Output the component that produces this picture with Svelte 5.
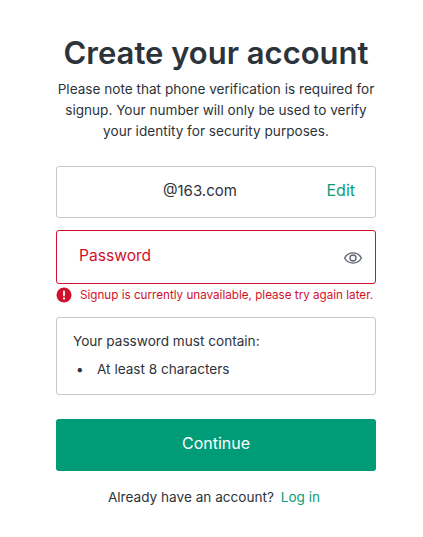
<script lang="ts">
  let showPassword = $state(false);
</script>

<main class="page">
  <h1 class="title">Create your account</h1>
  <p class="note">Please note that phone verification is required for signup. Your number will only be used to verify your identity for security purposes.</p>

  <div class="field email">
    <span class="email-value">@163.com</span>
    <button type="button" class="edit">Edit</button>
  </div>

  <div class="field password">
    <span class="placeholder">Password</span>
    <button type="button" class="eye" aria-label="Show password" onclick={() => (showPassword = !showPassword)}>
      <svg width="20" height="20" viewBox="0 0 20 20" fill="none" stroke="#5f6670" stroke-width="1.4">
        <path d="M1.6 10C3.4 6.7 6.4 4.9 10 4.9s6.6 1.8 8.4 5.1c-1.8 3.3-4.8 5.1-8.4 5.1S3.4 13.3 1.6 10Z" />
        <circle cx="10" cy="10" r="3" />
      </svg>
    </button>
  </div>

  <div class="error">
    <svg width="16" height="16" viewBox="0 0 16 16">
      <circle cx="8" cy="8" r="7.5" fill="#d0112b" />
      <rect x="7.1" y="3.6" width="1.8" height="5.6" rx="0.9" fill="#fff" />
      <circle cx="8" cy="11.4" r="1.05" fill="#fff" />
    </svg>
    <span>Signup is currently unavailable, please try again later.</span>
  </div>

  <div class="rules">
    <p>Your password must contain:</p>
    <ul>
      <li>At least 8 characters</li>
    </ul>
  </div>

  <button type="button" class="continue">Continue</button>

  <p class="login">Already have an account? <a href="#login">Log in</a></p>
</main>

<style>
  :global(body) {
    background: #fff;
    font-family: Inter, "Noto Sans", sans-serif;
    color: #2d333a;
  }

  .page {
    box-sizing: border-box;
    width: 320px;
    margin-left: 56px;
    padding-top: 34px;
    display: flex;
    flex-direction: column;
  }

  .title {
    margin: 0;
    font-size: 31px;
    line-height: 38px;
    font-weight: 600;
    text-align: center;
    white-space: nowrap;
  }

  .note {
    margin: 7px 0 0;
    font-size: 13.6px;
    line-height: 21px;
    text-align: center;
  }

  .field {
    box-sizing: border-box;
    display: flex;
    align-items: center;
    border-radius: 3px;
    border: 1px solid #c2c8d0;
  }

  .email {
    height: 52px;
    margin-top: 24px;
    padding: 0 20px 4px 106px;
    justify-content: space-between;
    font-size: 16px;
  }

  .email-value {
    font-size: 15px;
  }

  .edit {
    padding: 0;
    border: 0;
    background: none;
    font: inherit;
    color: #0d9c78;
  }

  .password {
    height: 54px;
    margin-top: 12px;
    padding: 0 12px 0 22px;
    justify-content: space-between;
    border-color: #d0112b;
    font-size: 15.6px;
  }

  .placeholder {
    color: #d0112b;
    margin-top: -3px;
  }

  .eye {
    display: flex;
    padding: 0;
    border: 0;
    background: none;
    margin-top: 1px;
  }

  .error {
    display: flex;
    align-items: center;
    gap: 8px;
    height: 16px;
    margin-top: 3px;
    font-size: 11.66px;
    color: #d0112b;
    white-space: nowrap;
  }

  .rules {
    box-sizing: border-box;
    height: 78px;
    margin-top: 14px;
    padding: 9px 16px;
    border: 1px solid #c2c8d0;
    border-radius: 3px;
    font-size: 13.6px;
    line-height: 28px;
  }

  .rules p {
    margin: 0;
  }

  .rules ul {
    margin: 0;
    padding: 0;
    list-style: none;
  }

  .rules li {
    display: flex;
  }

  .rules li::before {
    content: "•";
    width: 24px;
    padding-left: 3px;
    box-sizing: border-box;
  }

  .continue {
    height: 52px;
    margin-top: 24px;
    padding: 0 0 4px;
    border: 0;
    border-radius: 3px;
    background: #009b77;
    color: #fff;
    font: inherit;
    font-size: 16px;
  }

  .login {
    margin: 16px 0 0;
    padding-right: 4px;
    font-size: 13.6px;
    line-height: 20px;
    text-align: center;
  }

  .login a {
    margin-left: 3px;
    color: #0d9c78;
    text-decoration: none;
  }
</style>
